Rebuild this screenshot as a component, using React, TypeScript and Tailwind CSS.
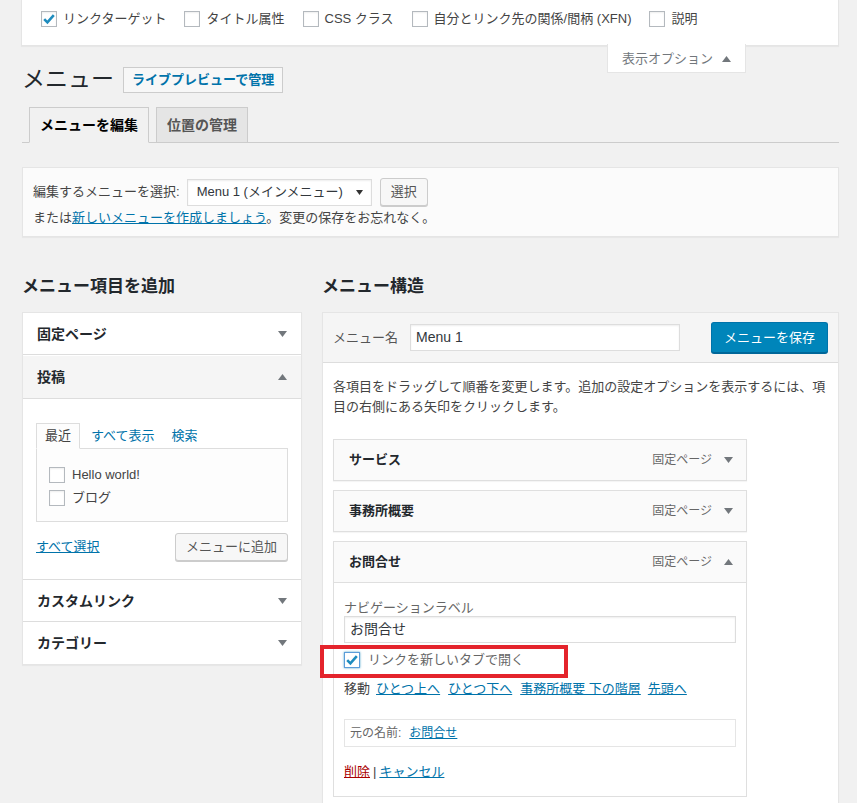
import React from "react";

const FONT = "font-['Liberation_Sans','Noto_Sans_CJK_JP',sans-serif]";

function Checkbox({ checked, focus }: { checked?: boolean; focus?: boolean }) {
  return (
    <span
      className={
        focus
          ? "inline-flex h-4 w-4 shrink-0 items-center justify-center border border-[#5b9dd9] bg-white shadow-[0_0_2px_rgba(30,140,190,0.8)]"
          : "inline-flex h-4 w-4 shrink-0 items-center justify-center border border-[#b4b9be] bg-white shadow-[inset_0_1px_2px_rgba(0,0,0,0.07)]"
      }
    >
      {checked ? (
        <svg width="14" height="14" viewBox="0 0 14 14" aria-hidden>
          <path d="M2.2 7.2 L5.4 10.4 L11.8 3.2" fill="none" stroke="#1e8cbe" strokeWidth="2.6" />
        </svg>
      ) : null}
    </span>
  );
}

function Caret({ up }: { up?: boolean }) {
  return (
    <svg width="9" height="6" viewBox="0 0 9 6" aria-hidden className="fill-[#72777c]">
      {up ? <path d="M0 6 L4.5 0 L9 6Z" /> : <path d="M0 0 L9 0 L4.5 6Z" />}
    </svg>
  );
}

const screenOptions = [
  { label: "リンクターゲット", checked: true },
  { label: "タイトル属性", checked: false },
  { label: "CSS クラス", checked: false },
  { label: "自分とリンク先の関係/間柄 (XFN)", checked: false },
  { label: "説明", checked: false },
];

function AccordionHeader({ title, open }: { title: string; open?: boolean }) {
  return (
    <div
      className={
        open
          ? "flex h-[42px] items-center justify-between bg-[#f5f5f5] pl-[14px] pr-[14px]"
          : "flex h-[42px] items-center justify-between bg-white pl-[14px] pr-[14px]"
      }
    >
      <span className="text-[14px] font-bold leading-5 text-[#23282d]">{title}</span>
      <Caret up={open} />
    </div>
  );
}

function MenuItemHandle({ title, open }: { title: string; open?: boolean }) {
  return (
    <div className="flex h-[42px] items-center justify-between border border-[#dfdfdf] bg-[#fafafa] pl-[15px] pr-[13px] shadow-[0_1px_1px_rgba(0,0,0,0.04)]">
      <span className="text-[13px] font-bold leading-5 text-[#23282d]">{title}</span>
      <span className="flex items-center gap-[12px]">
        <span className="text-[12px] leading-5 text-[#666]">固定ページ</span>
        <Caret up={open} />
      </span>
    </div>
  );
}

export default function App() {
  return (
    <div className={`${FONT} h-[803px] overflow-hidden bg-[#f1f1f1] text-[13px] text-[#444]`}>
      {/* screen options panel */}
      <div className="relative ml-[21px] mr-[18px] h-[46px] border border-t-0 border-[#e5e5e5] bg-white shadow-[0_1px_1px_rgba(0,0,0,0.04)]">
        <div className="flex items-center pl-[19px] pt-[9px]">
          {screenOptions.map((opt) => (
            <label key={opt.label} className="mr-[18px] flex items-center gap-[6px] leading-5">
              <Checkbox checked={opt.checked} />
              <span>{opt.label}</span>
            </label>
          ))}
        </div>
        <div className="absolute left-[585px] top-full -mt-px flex h-[29px] w-[139px] items-center justify-center gap-[9px] border border-t-0 border-[#e5e5e5] bg-white pt-[2px] text-[13px] text-[#72777c]">
          <span>表示オプション</span>
          <Caret up />
        </div>
      </div>

      <div className="ml-[22px] mr-[18px]">
        {/* title */}
        <div className="flex items-center gap-[9px] pt-[19px]">
          <h1 className="text-[23px] font-normal leading-[29px] text-[#23282d]">メニュー</h1>
          <span className="flex h-[26px] items-center border border-[#ccc] bg-[#f7f7f7] px-[8px] text-[13px] font-bold text-[#0073aa]">
            ライブプレビューで管理
          </span>
        </div>

        {/* tabs */}
        <div className="mt-[13px] flex gap-[7px] border-b border-[#ccc] pl-[7px]">
          <span className="-mb-px flex h-[36px] items-center border border-[#ccc] border-b-[#f1f1f1] bg-[#f1f1f1] px-[10px] text-[14px] font-bold text-black">
            メニューを編集
          </span>
          <span className="-mb-px flex h-[36px] items-center border border-[#ccc] bg-[#e5e5e5] px-[10px] text-[14px] font-bold text-[#555]">
            位置の管理
          </span>
        </div>

        {/* manage menus */}
        <div className="mt-[24px] border border-[#e5e5e5] bg-[#fbfbfb] px-[10px] pb-[8px] pt-[10px] shadow-[0_1px_1px_rgba(0,0,0,0.04)]">
          <div className="flex items-center">
            <span className="leading-5">編集するメニューを選択:</span>
            <span className="ml-[7px] flex h-[27px] w-[185px] items-center justify-between border border-[#ddd] bg-white pl-[9px] pr-[8px] text-[#32373c] shadow-[inset_0_1px_2px_rgba(0,0,0,0.07)]">
              <span>Menu 1 (メインメニュー)</span>
              <svg width="7" height="5" viewBox="0 0 7 5" aria-hidden>
                <path d="M0 0 L7 0 L3.5 5Z" fill="#333" />
              </svg>
            </span>
            <span className="ml-[8px] flex h-[28px] items-center rounded-[3px] border border-[#ccc] bg-[#f7f7f7] px-[10px] text-[#555] shadow-[0_1px_0_#ccc]">
              選択
            </span>
          </div>
          <p className="mt-[2px] leading-5">
            または
            <span className="text-[#0073aa] underline">新しいメニューを作成しましょう</span>
            。変更の保存をお忘れなく。
          </p>
        </div>

        {/* columns */}
        <div className="mt-[38px] flex gap-[20px]">
          {/* left */}
          <div className="w-[280px] shrink-0">
            <h2 className="text-[17px] font-bold leading-6 text-[#23282d]">メニュー項目を追加</h2>
            <div className="mt-[13px] divide-y divide-[#ddd] border border-[#e5e5e5] bg-white shadow-[0_1px_1px_rgba(0,0,0,0.04)]">
              <AccordionHeader title="固定ページ" />
              <div>
                <div className="pt-px">
                  <AccordionHeader title="投稿" open />
                </div>
                <div className="border-t border-[#ddd] px-[13px] pb-[18px] pt-[24px]">
                  <div className="flex items-end gap-[2px]">
                    <span className="-mb-px flex h-[26px] items-center border border-[#ddd] border-b-[#fdfdfd] bg-[#fdfdfd] px-[8px] text-[#444]">
                      最近
                    </span>
                    <span className="flex h-[25px] items-center px-[9px] text-[#0073aa]">すべて表示</span>
                    <span className="flex h-[25px] items-center px-[6px] text-[#0073aa]">検索</span>
                  </div>
                  <div className="border border-[#ddd] bg-[#fdfdfd] pb-[12px] pl-[12px] pt-[14px]">
                    <label className="flex h-[23px] items-center gap-[7px]">
                      <Checkbox />
                      <span>Hello world!</span>
                    </label>
                    <label className="flex h-[23px] items-center gap-[7px]">
                      <Checkbox />
                      <span>ブログ</span>
                    </label>
                  </div>
                  <div className="mt-[11px] flex items-center justify-between">
                    <span className="text-[#0073aa] underline">すべて選択</span>
                    <span className="flex h-[28px] items-center rounded-[3px] border border-[#ccc] bg-[#f7f7f7] px-[10px] text-[#555] shadow-[0_1px_0_#ccc]">
                      メニューに追加
                    </span>
                  </div>
                </div>
              </div>
              <AccordionHeader title="カスタムリンク" />
              <AccordionHeader title="カテゴリー" />
            </div>
          </div>

          {/* right */}
          <div className="min-w-0 flex-1">
            <h2 className="text-[17px] font-bold leading-6 text-[#23282d]">メニュー構造</h2>
            <div className="mt-[13px] border border-[#e5e5e5] bg-white shadow-[0_1px_1px_rgba(0,0,0,0.04)]">
              <div className="flex h-[50px] items-center border-b border-[#ddd] bg-[#f5f5f5] px-[10px]">
                <span className="text-[#555]">メニュー名</span>
                <span className="ml-[12px] flex h-[27px] w-[270px] items-center border border-[#ddd] bg-white px-[5px] text-[14px] text-[#32373c] shadow-[inset_0_1px_2px_rgba(0,0,0,0.07)]">
                  Menu 1
                </span>
                <span className="ml-auto flex h-[31px] w-[117px] items-center justify-center rounded-[3px] border border-[#0073aa] border-b-[#006799] bg-[#0085ba] text-white shadow-[0_1px_0_#006799]">
                  メニューを保存
                </span>
              </div>
              <div className="px-[10px] pb-[20px] pt-[14px]">
                <p className="leading-5 text-[#444]">
                  各項目をドラッグして順番を変更します。追加の設定オプションを表示するには、項
                  <br />
                  目の右側にある矢印をクリックします。
                </p>
                <div className="mt-[22px] flex w-[414px] flex-col gap-[9px]">
                  <MenuItemHandle title="サービス" />
                  <MenuItemHandle title="事務所概要" />
                  <div>
                    <MenuItemHandle title="お問合せ" open />
                    <div className="border border-t-0 border-[#dfdfdf] bg-white px-[10px] pb-[14px] pt-[17px]">
                      <label className="block leading-[16px] text-[#666]">ナビゲーションラベル</label>
                      <div className="flex h-[27px] items-center border border-[#ddd] bg-white px-[5px] text-[14px] text-[#32373c] shadow-[inset_0_1px_2px_rgba(0,0,0,0.07)]">
                        お問合せ
                      </div>
                      <div className="relative mt-[7px] flex h-[20px] items-center gap-[8px]">
                        <Checkbox checked focus />
                        <span className="text-[#666]">リンクを新しいタブで開く</span>
                        <span className="pointer-events-none absolute left-[-24px] top-[-5px] h-[33px] w-[248px] border-[4px] border-[#e4242c]" />
                      </div>
                      <div className="mt-[9px] flex items-center leading-5">
                        <span className="mr-[6px]">移動</span>
                        <span className="mr-[8px] text-[#0073aa] underline">ひとつ上へ</span>
                        <span className="mr-[8px] text-[#0073aa] underline">ひとつ下へ</span>
                        <span className="mr-[7px] text-[#0073aa] underline">事務所概要 下の階層</span>
                        <span className="text-[#0073aa] underline">先頭へ</span>
                      </div>
                      <div className="mt-[20px] flex h-[28px] items-center gap-[8px] border border-[#e5e5e5] px-[5px] text-[12px]">
                        <span className="text-[#666]">元の名前:</span>
                        <span className="text-[#0073aa] underline">お問合せ</span>
                      </div>
                      <p className="mt-[15px] leading-5">
                        <span className="text-[#a00] underline">削除</span>
                        <span className="mx-[3px] text-[#444]">|</span>
                        <span className="text-[#0073aa] underline">キャンセル</span>
                      </p>
                    </div>
                  </div>
                </div>
              </div>
            </div>
          </div>
        </div>
      </div>
    </div>
  );
}
